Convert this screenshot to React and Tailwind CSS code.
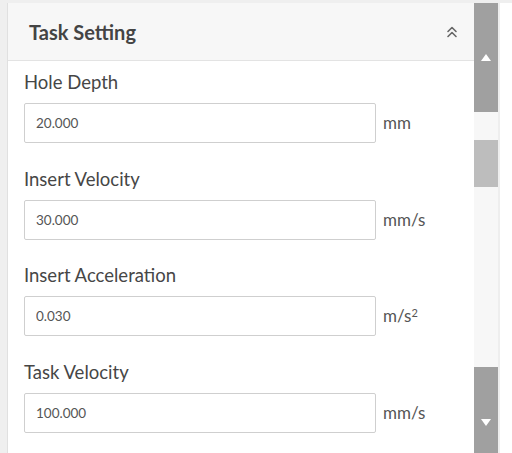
import React, { useState } from 'react';

const fields = [
  { label: 'Hole Depth', name: 'holeDepth', value: '20.000', unit: 'mm' },
  { label: 'Insert Velocity', name: 'insertVelocity', value: '30.000', unit: 'mm/s' },
  { label: 'Insert Acceleration', name: 'insertAcceleration', value: '0.030', unit: 'm/s', sup: '2' },
  { label: 'Task Velocity', name: 'taskVelocity', value: '100.000', unit: 'mm/s' }
];

function ChevronsUp() {
  return (
    <svg width="12" height="14" viewBox="0 0 12 14" fill="none" stroke="#666" strokeWidth="1.6" strokeLinecap="round" strokeLinejoin="round">
      <path d="M2 6.5 L6 2.5 L10 6.5" />
      <path d="M2 11.5 L6 7.5 L10 11.5" />
    </svg>
  );
}

export default function App() {
  const [formData, setFormData] = useState(
    Object.fromEntries(fields.map((f) => [f.name, f.value]))
  );

  const handleChange = (e) => {
    setFormData({ ...formData, [e.target.name]: e.target.value });
  };

  return (
    <div className="flex h-[453px] w-[512px] overflow-hidden bg-[#efefef] pt-[3px] pl-[7px] font-['Lato',sans-serif]">
      <div className="flex flex-1 overflow-hidden border-l border-[#e0e0e0] bg-white">
        {/* panel */}
        <div className="flex flex-1 flex-col overflow-hidden">
          <div className="flex h-[58px] shrink-0 items-center justify-between border-b border-[#e3e3e3] bg-[#f7f7f7] pl-[21px] pr-[16px]">
            <h2 className="text-[20px] font-bold text-[#444]">Task Setting</h2>
            <ChevronsUp />
          </div>

          <div className="flex shrink-0 flex-col pl-[16px] pt-[7px]">
            {fields.map((f) => (
              <div key={f.name} className="flex flex-col pb-[21.6px]">
                <label className="h-[28px] text-[18.5px] leading-[28px] text-[#464646]">{f.label}</label>
                <div className="mt-[7px] flex items-center">
                  <input
                    type="text"
                    name={f.name}
                    value={formData[f.name]}
                    onChange={handleChange}
                    className="h-[40px] w-[352px] rounded-[2px] border border-[#cfcfcf] px-[11px] text-[13.5px] text-[#555] focus:outline-none"
                  />
                  <span className="ml-[7px] text-[17px] text-[#555]">
                    {f.unit}
                    {f.sup && <sup className="text-[11px]">{f.sup}</sup>}
                  </span>
                </div>
              </div>
            ))}
          </div>
        </div>

        {/* scrollbar */}
        <div className="flex w-[24px] flex-col overflow-hidden">
          <div className="flex h-[109px] shrink-0 items-center justify-center bg-[#a0a0a0]">
            <svg width="10" height="7" viewBox="0 0 10 7"><path d="M0 7 L5 0 L10 7 Z" fill="#fff" /></svg>
          </div>
          <div className="h-[28px] shrink-0 bg-[#f7f7f7]" />
          <div className="h-[47px] shrink-0 bg-[#bdbdbd]" />
          <div className="h-[180px] shrink-0 bg-[#f7f7f7]" />
          <div className="flex h-[110px] shrink-0 items-center justify-center bg-[#a0a0a0]">
            <svg width="10" height="7" viewBox="0 0 10 7"><path d="M0 0 L10 0 L5 7 Z" fill="#fff" /></svg>
          </div>
        </div>
        <div className="w-[14px] border-l-2 border-[#eeeeee] bg-white" />
      </div>
    </div>
  );
}
